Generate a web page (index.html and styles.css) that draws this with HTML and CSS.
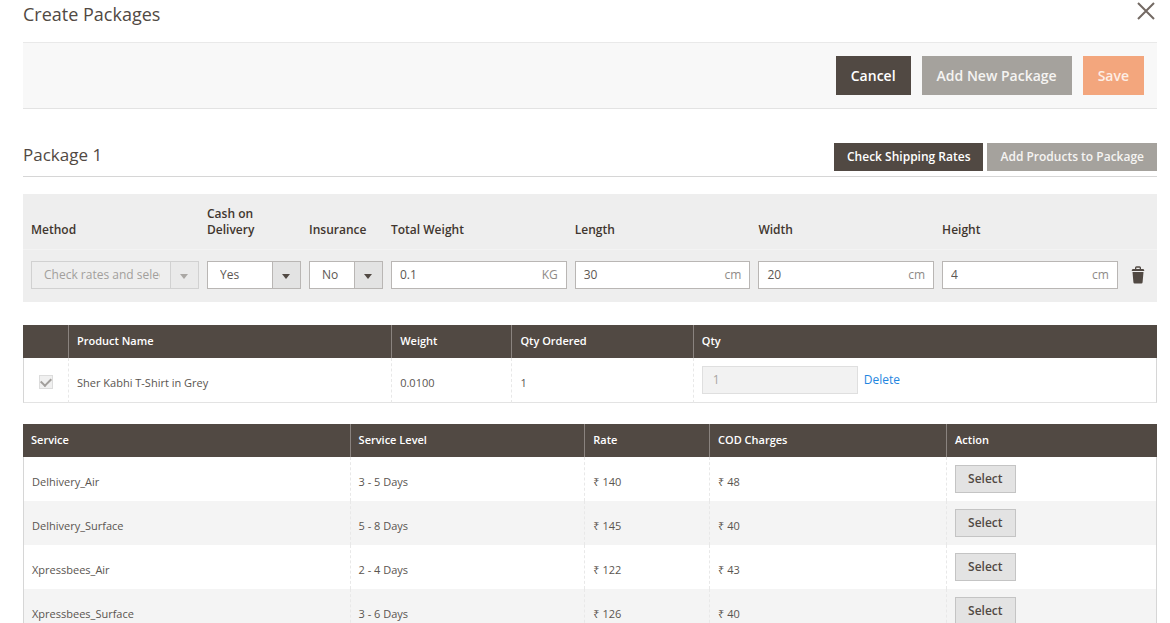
FILE: index.html
```html
<!DOCTYPE html>
<html lang="en">
<head>
<meta charset="utf-8">
<title>Create Packages</title>
<link rel="stylesheet" href="styles.css">
</head>
<body>
<main class="modal">
  <header class="modal-header">
    <h1 class="title title-main">Create Packages</h1>
    <button type="button" class="icon-button" aria-label="Close">
      <svg class="close-icon" viewBox="0 0 18 18" aria-hidden="true"><path d="M1 1L17 17M17 1L1 17"/></svg>
    </button>
  </header>
  <div class="toolbar">
    <button type="button" class="button button-dark">Cancel</button>
    <button type="button" class="button button-muted">Add New Package</button>
    <button type="button" class="button button-save">Save</button>
  </div>
  <section>
    <div class="package-header">
      <h2 class="title">Package 1</h2>
      <div class="package-actions">
        <button type="button" class="button button-small button-dark">Check Shipping Rates</button>
        <button type="button" class="button button-small button-muted">Add Products to Package</button>
      </div>
    </div>
    <table class="options">
      <colgroup><col class="o-method"><col class="o-cod"><col class="o-insurance"><col class="o-size"><col class="o-size"><col class="o-size"><col class="o-size"><col></colgroup>
      <thead>
        <tr>
          <th><label for="method">Method</label></th>
          <th><label for="cod">Cash on Delivery</label></th>
          <th><label for="insurance">Insurance</label></th>
          <th><label for="weight">Total Weight</label></th>
          <th><label for="length">Length</label></th>
          <th><label for="width">Width</label></th>
          <th><label for="height">Height</label></th>
          <th></th>
        </tr>
      </thead>
      <tbody>
        <tr>
          <td><div class="select-box disabled"><select id="method" disabled><option>Check rates and select</option></select></div></td>
          <td><div class="select-box"><select id="cod"><option>Yes</option><option>No</option></select></div></td>
          <td><div class="select-box"><select id="insurance"><option>No</option><option>Yes</option></select></div></td>
          <td><div class="measure"><input id="weight" type="text" value="0.1"><span>KG</span></div></td>
          <td><div class="measure"><input id="length" type="text" value="30"><span>cm</span></div></td>
          <td><div class="measure"><input id="width" type="text" value="20"><span>cm</span></div></td>
          <td><div class="measure"><input id="height" type="text" value="4"><span>cm</span></div></td>
          <td class="remove">
            <button type="button" class="icon-button" aria-label="Delete package">
              <svg class="trash-icon" viewBox="0 0 14 18" aria-hidden="true"><path d="M4 3V1.8Q4 .3 5.5.3H8.5Q10 .3 10 1.8V3H12.3Q13.3 3.3 13.3 5H.7Q.7 3.3 1.7 3ZM5.3 3H8.7V1.8H5.3ZM1.5 6H12.5L11.6 16.3Q11.5 17.5 10.3 17.5H3.7Q2.5 17.5 2.4 16.3Z"/></svg>
            </button>
          </td>
        </tr>
      </tbody>
    </table>
    <table class="grid products">
      <colgroup><col class="p-check"><col class="p-name"><col class="p-weight"><col class="p-ordered"><col></colgroup>
      <thead><tr><th></th><th>Product Name</th><th>Weight</th><th>Qty Ordered</th><th>Qty</th></tr></thead>
      <tbody>
        <tr>
          <td class="check-cell"><input type="checkbox" class="check" aria-label="Sher Kabhi T-Shirt in Grey" checked disabled></td>
          <td>Sher Kabhi T-Shirt in Grey</td>
          <td>0.0100</td>
          <td>1</td>
          <td class="action-cell"><div class="qty"><input type="text" value="1" aria-label="Qty" disabled><a href="#">Delete</a></div></td>
        </tr>
      </tbody>
    </table>
    <table class="grid services">
      <colgroup><col class="s-service"><col class="s-level"><col class="s-rate"><col class="s-cod"><col></colgroup>
      <thead><tr><th>Service</th><th>Service Level</th><th>Rate</th><th>COD Charges</th><th>Action</th></tr></thead>
      <tbody>
        <tr><td>Delhivery_Air</td><td>3 - 5 Days</td><td>₹ 140</td><td>₹ 48</td><td class="action-cell"><button type="button" class="button-select">Select</button></td></tr>
        <tr><td>Delhivery_Surface</td><td>5 - 8 Days</td><td>₹ 145</td><td>₹ 40</td><td class="action-cell"><button type="button" class="button-select">Select</button></td></tr>
        <tr><td>Xpressbees_Air</td><td>2 - 4 Days</td><td>₹ 122</td><td>₹ 43</td><td class="action-cell"><button type="button" class="button-select">Select</button></td></tr>
        <tr><td>Xpressbees_Surface</td><td>3 - 6 Days</td><td>₹ 126</td><td>₹ 40</td><td class="action-cell"><button type="button" class="button-select">Select</button></td></tr>
      </tbody>
    </table>
  </section>
</main>
</body>
</html>
```
FILE: styles.css
```css
* { box-sizing: border-box; }

body {
  margin: 0;
  background: #fff;
  color: #41362f;
  font: 12px/16px "Open Sans", "Noto Sans", sans-serif;
}

button, input, select { font: inherit; color: inherit; margin: 0; }

.modal {
  height: 100vh;
  overflow: hidden;
  padding: 0 13px 0 23px;
}

.modal-header {
  display: flex;
  justify-content: space-between;
  align-items: flex-start;
  height: 42px;
}

.title {
  margin: 0;
  color: #514943;
  font-size: 17px;
  font-weight: 400;
  line-height: 24px;
}

.title-main { font-size: 18px; line-height: 28px; }

.icon-button {
  display: inline-flex;
  padding: 2px;
  border: 0;
  background: none;
}

.close-icon {
  width: 18px;
  height: 18px;
  fill: none;
  stroke: #736963;
  stroke-width: 2;
}

.toolbar {
  display: flex;
  justify-content: flex-end;
  gap: 11px;
  padding: 13px;
  border-top: 1px solid #e9e9e9;
  border-bottom: 1px solid #e3e3e3;
  background: #f8f8f8;
}

.button {
  padding: 10px 15px;
  border: 0;
  color: #fff;
  font-size: 14px;
  line-height: 19px;
  font-weight: 600;
}

.button-dark { background: #514943; }
.button-muted { background: #a5a29d; color: #f5f4f2; }
.button-save { background: #f3a67d; color: #fdeee5; }

.button-small {
  padding: 6px 13px;
  font-size: 12px;
  line-height: 16px;
}

.package-header {
  display: flex;
  justify-content: space-between;
  align-items: flex-start;
  margin-top: 34px;
  padding-bottom: 5px;
  border-bottom: 1px solid #d6d6d6;
}

.package-actions { display: flex; gap: 4px; }

table {
  width: 100%;
  table-layout: fixed;
  border-collapse: separate;
  border-spacing: 0;
}

th, td { padding: 0 8px; text-align: left; }

.options { margin-top: 17px; background: #eee; }
.options th { height: 56px; padding: 0 0 11px 8px; vertical-align: bottom; font-weight: 600; border-bottom: 1px solid #f3f3f3; }
.options td { height: 52px; padding: 0 0 2px 8px; }
.o-method { width: 176px; }
.o-cod { width: 102px; }
.o-insurance { width: 82px; }
.o-size { width: 16.2%; }

.options .remove { padding-left: 13px; }
.remove .icon-button { padding: 1px 0; vertical-align: middle; }
.trash-icon { width: 14px; height: 18px; fill: #514943; fill-rule: evenodd; }

.select-box {
  position: relative;
  height: 28px;
  border: 1px solid #b9b6b4;
  color: #5d5752;
}

.select-box select {
  appearance: none;
  display: block;
  width: 100%;
  height: 100%;
  padding: 0 38px 0 12px;
  border: 0;
  border-radius: 0;
  opacity: 1;
  color: inherit;
  background: linear-gradient(to left, #e3e3e3 27px, #b9b6b4 27px, #b9b6b4 28px, #fff 28px);
}

.select-box::after {
  content: "";
  position: absolute;
  top: 12px;
  right: 10px;
  border: 4px solid transparent;
  border-top: 5px solid #514943;
  border-bottom: 0;
  pointer-events: none;
}

.disabled { border-color: #d1d1d1; color: #a29f9c; }
.disabled select { background: linear-gradient(to left, #eaeaea 27px, #d1d1d1 27px, #d1d1d1 28px, #eee 28px); }
.disabled::after { border-top-color: #aaa7a4; }

.measure {
  display: flex;
  align-items: center;
  height: 28px;
  padding: 0 8px;
  border: 1px solid #b9b6b4;
  background: #fff;
  color: #8f8b88;
}

.measure input {
  flex: 1;
  min-width: 0;
  padding: 0;
  border: 0;
  background: none;
  color: #5d5752;
}

.grid th {
  height: 33px;
  padding-bottom: 1px;
  background: #514943;
  color: #fff;
  font-size: 11px;
  font-weight: 600;
}

.grid th + th { border-left: 1px solid #8a837f; }

.grid td {
  height: 44px;
  padding-top: 5px;
  font-size: 11px;
  color: #5a5550;
}

.grid td + td { border-left: 1px dashed #e8e8e8; }
.grid td:first-child { border-left: 1px solid #d6d6d6; }
.grid td:last-child { border-right: 1px solid #d6d6d6; }
.grid .action-cell { padding-top: 0; padding-bottom: 1px; font-size: 12px; }

.products { margin-top: 23px; }
.products td { border-bottom: 1px solid #e3e3e3; height: 45px; }
.p-check { width: 45px; }
.p-name { width: 28.5%; }
.p-weight { width: 10.6%; }
.p-ordered { width: 16%; }

.products .check-cell { padding: 2px 0 0; text-align: center; }

.check {
  appearance: none;
  display: inline-grid;
  place-items: center;
  width: 14px;
  height: 14px;
  border: 1px solid #dcdcdc;
  background: #f0f0f0;
  vertical-align: middle;
}

.check::before {
  content: "";
  width: 8px;
  height: 5px;
  border: solid #a29f9c;
  border-width: 0 0 2px 2px;
  transform: rotate(-45deg) translate(1px, -1px);
}

.qty { display: flex; align-items: center; gap: 6px; }
.qty input {
  width: 156px;
  height: 28px;
  padding: 0 10px;
  border: 1px solid #dfdfdf;
  background: #f2f2f2;
  color: #a9a6a3;
}
.qty a { color: #1f86e0; text-decoration: none; }

.services { margin-top: 21px; }
.services tbody tr:nth-child(even) { background: #f4f4f4; }
.s-service { width: 28.8%; }
.s-level { width: 20.7%; }
.s-rate { width: 11%; }
.s-cod { width: 20.9%; }

.button-select {
  display: block;
  padding: 5px 12px;
  border: 1px solid #c4c4c4;
  background: #e3e3e3;
  color: #514943;
  font-weight: 600;
}
```
